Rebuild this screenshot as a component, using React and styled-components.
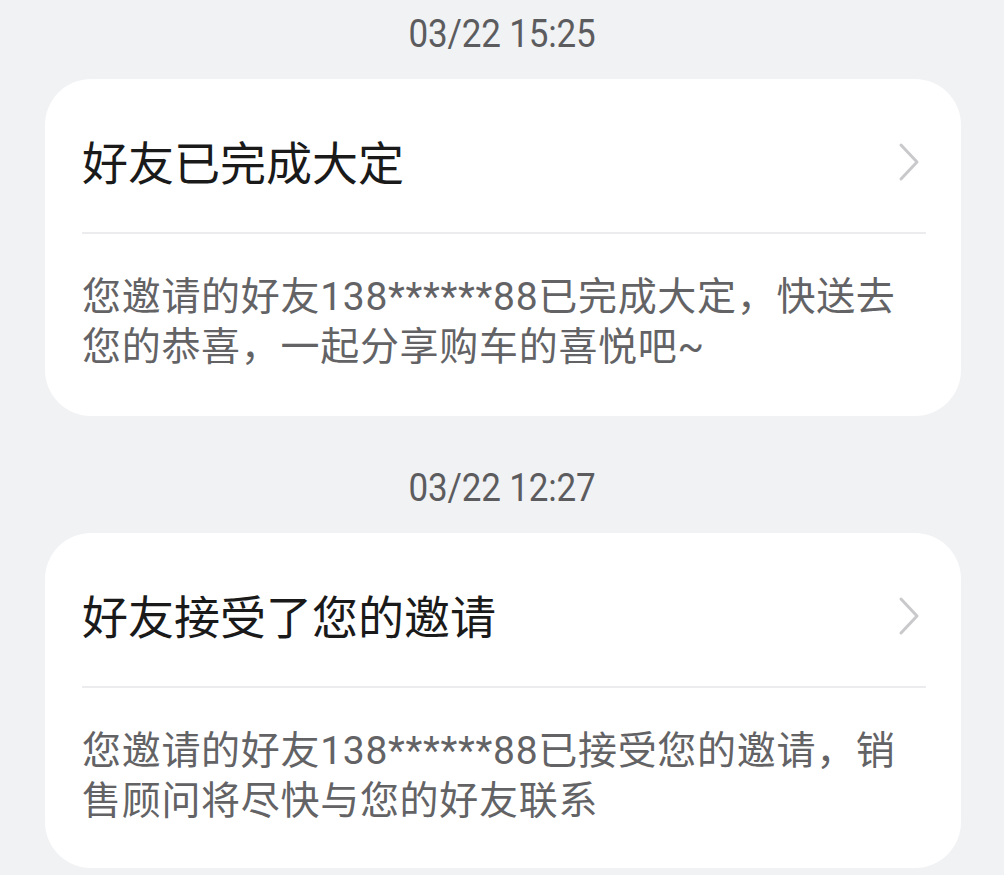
import styled, { createGlobalStyle } from "styled-components";

const GlobalStyle = createGlobalStyle`
  html, body {
    margin: 0;
    padding: 0;
    background: #f1f2f4;
  }
  body {
    font-family: Roboto, "Noto Sans CJK SC", sans-serif;
    -webkit-font-smoothing: antialiased;
  }
`;

const PAGE = styled.main`
  width: 1004px;
  height: 875px;
  overflow: hidden;
  background: #f1f2f4;
`;

const GROUP = styled.section`
  display: flex;
  flex-direction: column;
`;

const TIME = styled.div`
  height: 40px;
  padding: 15px 0 24px;
  /* text centre sits ~44px above the card */
  font-size: 35px;
  line-height: 40px;
  color: #5c5c5f;
  text-align: center;
  span {
    display: inline-block;
    vertical-align: top;
    letter-spacing: -0.2px;
    transform: scaleY(1.1);
  }
`;

const CARD = styled.article`
  margin: 0 0 38px 45px;
  width: 916px;
  height: ${(p) => p.h}px;
  box-sizing: border-box;
  background: #ffffff;
  border-radius: 46px;
  padding: 0 35px 0 37px;
  display: flex;
  flex-direction: column;
`;

const HEAD = styled.div`
  height: 155px;
  box-sizing: border-box;
  padding: 47px 6px 0 0;
  display: flex;
  justify-content: space-between;
  align-items: flex-start;
  border-bottom: 2px solid #ececee;
`;

const TITLE = styled.h2`
  margin: 0;
  font-family: "Noto Sans CJK SC", sans-serif;
  font-size: 46px;
  font-weight: 400;
  line-height: 68px;
  color: #1a1a1a;
`;

const ARROW = styled.svg`
  width: 22px;
  height: 40px;
  margin-top: 16px;
  flex: none;
`;

const BODY = styled.p`
  margin: 38px 0 0;
  font-size: 39px;
  line-height: 50px;
  color: #636366;
  font-family: Roboto, "Noto Sans CJK SC", sans-serif;
  letter-spacing: 0.7px;
  white-space: nowrap;
`;

const Chevron = () => (
  <ARROW viewBox="0 0 22 40">
    <path
      d="M3 3 L19 20 L3 37"
      fill="none"
      stroke="#c9c9cc"
      strokeWidth="3"
      strokeLinecap="round"
      strokeLinejoin="round"
    />
  </ARROW>
);

const messages = [
  {
    time: "03/22 15:25",
    title: "好友已完成大定",
    lines: ["您邀请的好友138******88已完成大定，快送去", "您的恭喜，一起分享购车的喜悦吧~"],
    h: 337,
  },
  {
    time: "03/22 12:27",
    title: "好友接受了您的邀请",
    lines: ["您邀请的好友138******88已接受您的邀请，销", "售顾问将尽快与您的好友联系"],
    h: 335,
  },
];

export default function App() {
  return (
    <>
      <GlobalStyle />
      <PAGE>
        {messages.map((m) => (
          <GROUP key={m.time}>
            <TIME>
              <span>{m.time}</span>
            </TIME>
            <CARD h={m.h}>
              <HEAD>
                <TITLE>{m.title}</TITLE>
                <Chevron />
              </HEAD>
              <BODY>
                {m.lines[0]}
                <br />
                {m.lines[1]}
              </BODY>
            </CARD>
          </GROUP>
        ))}
      </PAGE>
    </>
  );
}
